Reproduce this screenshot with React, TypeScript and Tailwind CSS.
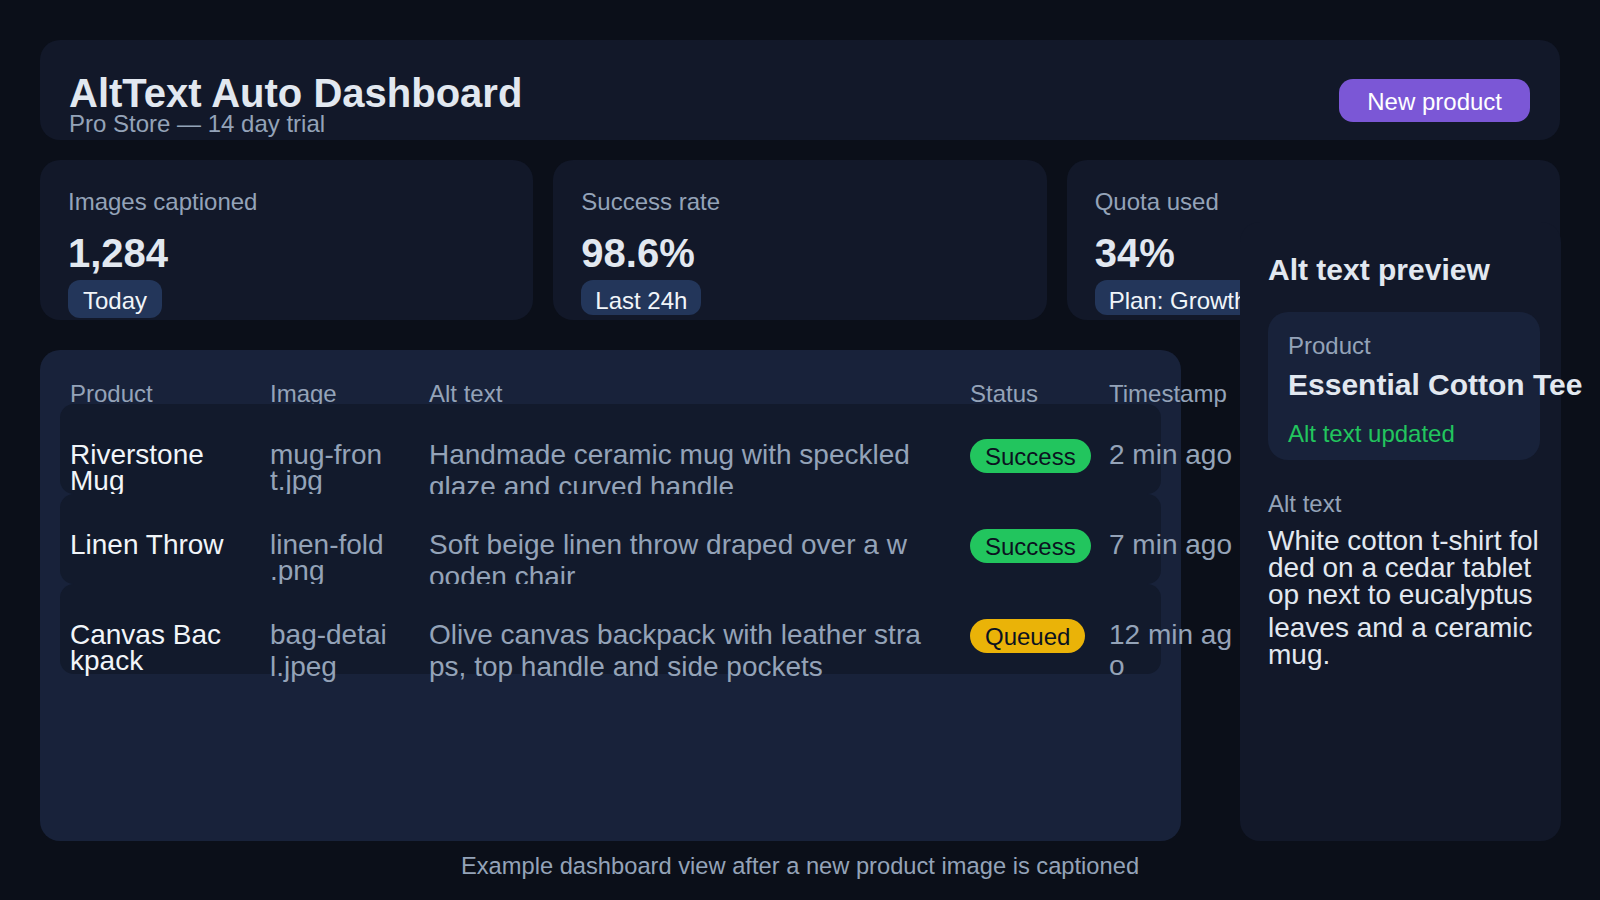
import React from "react";

type Stat = {
  label: string;
  value: string;
  pill: string;
  tall?: boolean;
};

type Row = {
  product: string;
  image: string;
  alt: string;
  status: "Success" | "Queued";
  time: string;
  imageCls: string;
};

const STATS: Stat[] = [
  { label: "Images captioned", value: "1,284", pill: "Today", tall: true },
  { label: "Success rate", value: "98.6%", pill: "Last 24h" },
  { label: "Quota used", value: "34%", pill: "Plan: Growth" },
];

const ROWS: Row[] = [
  {
    product: "Riverstone Mug",
    image: "mug-front.jpg",
    alt: "Handmade ceramic mug with speckled glaze and curved handle",
    status: "Success",
    time: "2 min ago",
    imageCls: "leading-[26px] pt-[3px]",
  },
  {
    product: "Linen Throw",
    image: "linen-fold.png",
    alt: "Soft beige linen throw draped over a wooden chair",
    status: "Success",
    time: "7 min ago",
    imageCls: "leading-[26px] pt-[3px]",
  },
  {
    product: "Canvas Backpack",
    image: "bag-detail.jpeg",
    alt: "Olive canvas backpack with leather straps, top handle and side pockets",
    status: "Queued",
    time: "12 min ago",
    imageCls: "leading-[32px]",
  },
];

const COLS = "grid grid-cols-[200px_159px_541px_139px_140px]";

function StatusBadge({ status }: { status: Row["status"] }) {
  const bg = status === "Success" ? "bg-[#22c55e]" : "bg-[#eab308]";
  return (
    <span
      className={`mt-[0.5px] rounded-full px-[15px] pt-[3px] pb-[1px] text-[24px] leading-[30px] whitespace-nowrap text-[#0b1220] ${bg}`}
    >
      {status}
    </span>
  );
}

export default function App() {
  return (
    <div className="w-[1600px] h-[900px] overflow-hidden bg-[#0b0f19] px-10 pt-10 font-['Liberation_Sans',Arial,sans-serif]">
      {/* Header */}
      <header className="flex items-start justify-between h-[100px] rounded-[20px] bg-[#121829] pl-[29px] pr-[30px] pt-[33px]">
        <div>
          <h1 className="text-[40px] leading-none font-bold text-[#e2e8f0]">AltText Auto Dashboard</h1>
          <p className="text-[24px] leading-[22px] text-[#94a3b8]">Pro Store — 14 day trial</p>
        </div>
        <button className="mt-[6px] rounded-[14px] bg-[#7b57d6] px-[28px] pt-[9px] pb-[7px] text-[24px] leading-[27px] text-white">
          New product
        </button>
      </header>

      {/* Stat cards */}
      <div className="grid grid-cols-3 gap-5 mt-5">
        {STATS.map((s) => (
          <div key={s.label} className="h-[160px] rounded-[20px] bg-[#121829] px-7 pt-[26px]">
            <div className="text-[24px] leading-[32px] text-[#94a3b8]">{s.label}</div>
            <div className="mt-[15px] text-[40px] leading-none font-bold text-[#e2e8f0]">{s.value}</div>
            <div
              className={`inline-block mt-[7px] rounded-[12px] bg-[#23365a] pt-[7px] text-[24px] leading-[28px] whitespace-nowrap text-[#f1f5f9] ${
                s.tall ? "pb-[3px] px-[15px]" : "pb-0 px-[14px]"
              }`}
            >
              {s.pill}
            </div>
          </div>
        ))}
      </div>

      {/* Main area */}
      <div className="relative mt-[30px] h-[491px]">
        <section className="w-[1141px] h-full rounded-[20px] bg-[#18223a] px-5 pt-[28px]">
          <div className={`${COLS} px-[10px] text-[24px] leading-[32px] text-[#94a3b8]`}>
            <div>Product</div>
            <div>Image</div>
            <div>Alt text</div>
            <div>Status</div>
            <div className="whitespace-nowrap">Timestamp</div>
          </div>
          <div className="-mt-[6px]">
            {ROWS.map((r) => (
              <div
                key={r.product}
                className={`relative ${COLS} h-[90px] rounded-[14px] bg-[#121a2c] px-[10px] pt-[34.5px] text-[28px] break-all [line-break:anywhere]`}
              >
                <div className="pr-[40px] pt-[3px] leading-[26px] text-[#f1f5f9]">{r.product}</div>
                <div className={`pr-[41px] text-[#94a3b8] ${r.imageCls}`}>{r.image}</div>
                <div className="pr-[48.5px] leading-[32px] text-[#94a3b8]">{r.alt}</div>
                <div className="flex items-start">
                  <StatusBadge status={r.status} />
                </div>
                <div className="w-[130px] leading-[31px] text-[#94a3b8]">{r.time}</div>
              </div>
            ))}
          </div>
        </section>

        {/* Preview panel, laid over the quota card */}
        <aside className="absolute left-[1200px] top-[-128px] bottom-0 w-[321px] rounded-[20px] bg-[#121829] pl-7 pt-[30px]">
          <h2 className="text-[30px] leading-[36px] font-bold text-[#e2e8f0]">Alt text preview</h2>
          <div className="mt-6 w-[272px] rounded-[20px] bg-[#18223a] px-5 pt-5 pb-[12px]">
            <div className="text-[24px] leading-[28px] text-[#94a3b8]">Product</div>
            <div className="mt-[7px] text-[30px] leading-[36px] font-bold whitespace-nowrap text-[#e2e8f0]">
              Essential Cotton Tee
            </div>
            <div className="mt-[17px] text-[24px] leading-[28px] text-[#22c55e]">Alt text updated</div>
          </div>
          <div className="mt-[30px] text-[24px] leading-[28px] text-[#94a3b8]">Alt text</div>
          <div className="w-[272px] text-[28px] leading-[27px] break-all text-[#e2e8f0]">
            <p className="mt-[9px]">White cotton t-shirt folded on a cedar tabletop next to eucalyptus</p>
            <p className="mt-[6px]">leaves and a ceramic mug.</p>
          </div>
        </aside>
      </div>

      <p className="mt-[9px] text-center text-[23.7px] leading-[32px] text-[#94a3b8]">
        Example dashboard view after a new product image is captioned
      </p>
    </div>
  );
}
